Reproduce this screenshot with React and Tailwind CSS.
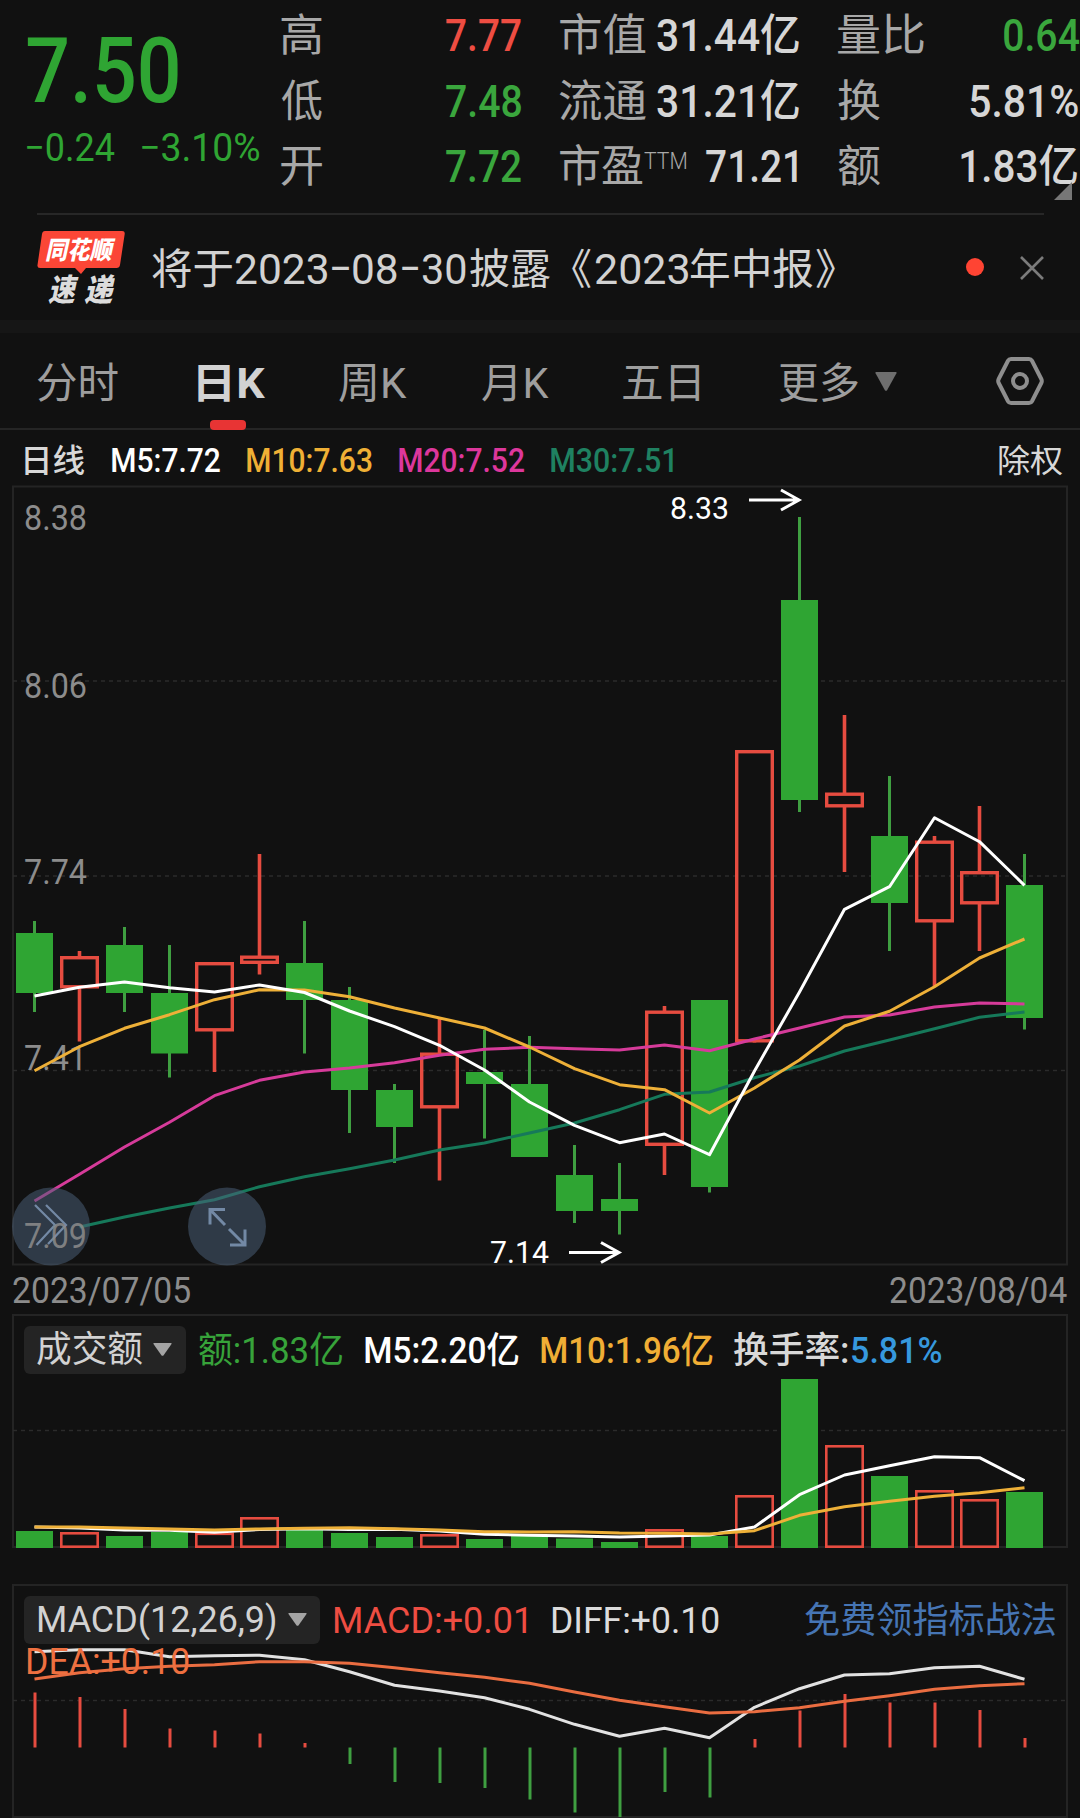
import { useLayoutEffect, useRef, useState } from 'react';
import clsx from 'clsx';

const GREEN = '#2fa533';
const RED = '#e64c40';
const STEP = 45;
const FIRST_X = 34.5;

const cx = (i) => FIRST_X + i * STEP;

// [up, high, bodyTop, bodyBottom, low]
const candles = [
  [0, 921, 933, 993, 1012],
  [1, 951, 956, 988.5, 1041.5],
  [0, 927, 945, 993, 1012],
  [0, 945, 993, 1053.5, 1077.5],
  [1, 962, 962, 1031.5, 1072],
  [1, 854, 955.5, 964, 974.5],
  [0, 921, 963, 1000, 1053.5],
  [0, 987, 1000, 1090, 1133],
  [0, 1084, 1090, 1127, 1163],
  [1, 1018, 1052.5, 1108.5, 1180.5],
  [0, 1030, 1072, 1084, 1138.5],
  [0, 1036, 1084, 1157, 1157],
  [0, 1145, 1175, 1211, 1223],
  [0, 1163, 1199, 1211, 1234.5],
  [1, 1006, 1010.5, 1146, 1175],
  [0, 1000, 1000, 1187, 1192.5],
  [1, 750, 750, 1042.5, 1042.5],
  [0, 517, 600, 800, 812],
  [1, 715, 792.5, 807.5, 872],
  [0, 776, 836, 903, 951],
  [1, 836, 840.5, 922.5, 986.5],
  [1, 806, 871, 904.5, 951],
  [0, 854, 885, 1018, 1029.5],
];

const ma5 = [996, 987.3, 982, 987.7, 992, 985, 992.5, 1011, 1026.7, 1045.3, 1070, 1102, 1125.3, 1142.7, 1134, 1154.7, 1071, 992, 909.3, 886.7, 817.7, 841.7, 885.3];
const ma10 = [1070.7, 1046.7, 1028.3, 1014.7, 999.7, 989.7, 990, 996.7, 1008, 1018, 1028, 1047, 1068.7, 1084.7, 1089.7, 1113, 1088, 1060, 1026, 1011.3, 986.7, 958, 939];
const ma20 = [1201, 1174.3, 1147, 1122.3, 1095.7, 1080.3, 1072, 1068, 1062.7, 1055.3, 1049.3, 1047.3, 1048.7, 1050, 1045, 1050.7, 1039, 1028, 1017, 1015, 1007, 1003, 1004];
const ma30 = [1227, 1217, 1208, 1199.7, 1186.7, 1176.7, 1168.7, 1160, 1150, 1143, 1133, 1123, 1109.7, 1094.3, 1092, 1077.7, 1066, 1051, 1040, 1028.7, 1017.3, 1012];

const volumeTops = [1531, 1532, 1536, 1532, 1532.5, 1517, 1530, 1533, 1537, 1534, 1539, 1536, 1538.5, 1542, 1529, 1536, 1495, 1379, 1445, 1476, 1490, 1499, 1492];
const vol5 = [1527, 1528, 1530, 1530.3, 1532.3, 1529.5, 1528.7, 1529.5, 1529.3, 1531, 1534.3, 1535.3, 1536, 1537, 1536, 1535, 1527, 1494.7, 1475, 1465.7, 1456.7, 1457.7, 1480.7];
const vol10 = [1527, 1527, 1528, 1529, 1530, 1529, 1528.3, 1527.7, 1528.7, 1530, 1531.7, 1532, 1531.7, 1533, 1533.3, 1534, 1530.7, 1515.3, 1506.7, 1501.3, 1496.3, 1492.7, 1487.7];

const MACD_ZERO = 1747.5;
const macdEnds = [1692.5, 1697, 1709, 1728.5, 1730.5, 1733.5, 1743, 1764, 1782, 1783, 1788, 1799.5, 1812.5, 1817, 1792, 1797.5, 1739, 1710.5, 1694, 1702.5, 1702.5, 1710, 1738];
const diff = [1651.7, 1649.7, 1649.7, 1656.7, 1655.7, 1655.3, 1659.7, 1671.7, 1685.3, 1691, 1697.7, 1709.3, 1724.3, 1736.3, 1728.3, 1737.7, 1707.3, 1688.7, 1675, 1673.7, 1667.7, 1666.3, 1679.3];
const dea = [1679, 1672.7, 1668.7, 1666.3, 1664.7, 1661.7, 1661.7, 1663.3, 1667.7, 1672.7, 1677.3, 1683.3, 1692, 1700.3, 1706.7, 1713, 1711.7, 1707.7, 1701.3, 1695.7, 1689.3, 1685.7, 1683.7];

// Condenses or stretches a label so that its ink is exactly w wide
const Fit = ({ w, className, children }) => {
  const ref = useRef(null);
  const [transform, setTransform] = useState('none');

  useLayoutEffect(() => {
    const css = getComputedStyle(ref.current);
    const ctx = document.createElement('canvas').getContext('2d');
    ctx.font = `${css.fontStyle} ${css.fontWeight} ${css.fontSize} ${css.fontFamily}`;
    const m = ctx.measureText(children);
    const scale = w / (m.actualBoundingBoxLeft + m.actualBoundingBoxRight);
    setTransform(`translateX(${m.actualBoundingBoxLeft * scale}px) scaleX(${scale})`);
  }, [w, children]);

  return (
    <span className={clsx('block shrink-0 whitespace-nowrap', className)} style={{ width: w }}>
      <span ref={ref} className="inline-block origin-left" style={{ transform }}>{children}</span>
    </span>
  );
};

const Line = ({ data, color, start = 0, width = 3 }) => (
  <polyline
    points={data.map((y, i) => `${cx(i + start)},${y}`).join(' ')}
    fill="none"
    stroke={color}
    strokeWidth={width}
    strokeLinejoin="round"
  />
);

const Grid = ({ y }) => (
  <line x1="13" x2="1066" y1={y} y2={y} stroke="#2b2b2b" strokeWidth="1.6" strokeDasharray="4 4" />
);

const Frame = ({ y, h }) => (
  <rect x="13" y={y} width="1054" height={h} fill="none" stroke="#242424" strokeWidth="2" />
);

const Bar = ({ i, top, bottom, up, stroke = 3.4 }) =>
  up ? (
    <rect
      x={cx(i) - 19.5 + stroke / 2}
      y={top + stroke / 2}
      width={39 - stroke}
      height={bottom - top - stroke}
      fill="none"
      stroke={RED}
      strokeWidth={stroke}
    />
  ) : (
    <rect x={cx(i) - 18.5} y={top} width="37" height={bottom - top} fill={GREEN} />
  );

const Caret = ({ className }) => (
  <svg viewBox="0 0 20 14" preserveAspectRatio="none" className={className}>
    <path d="M1 0h18q1 0 .5 1l-8.5 12.4q-1 .9-2 0L.5 1Q0 0 1 0z" fill="currentColor" />
  </svg>
);

const Arrow = ({ x, y }) => (
  <path d={`M${x} ${y}h49M${x + 32} ${y - 10}L${x + 50} ${y}l-18 10`} fill="none" stroke="#fff" strokeWidth="3" />
);

const Quote = () => (
  <header className="flex h-[213px] pl-[27px]">
    <div className="w-[254px] pt-[22px] text-[#2fa533]">
      <Fit w={151} className="text-[90px] leading-[99px] font-medium">7.50</Fit>
      <div className="flex gap-[27px] text-[39px] leading-[55px]">
        <Fit w={88}>−0.24</Fit>
        <Fit w={117}>−3.10%</Fit>
      </div>
    </div>

    <div className="flex w-[279px] flex-col pt-[4px] text-[44px] leading-[65.5px]">
      <div className="flex">
        <Fit w={41} className="text-[#a8a8a8]">高</Fit>
        <Fit w={75} className="ml-[124px] font-medium text-[#ee4d42]">7.77</Fit>
      </div>
      <div className="flex">
        <Fit w={41} className="text-[#a8a8a8]">低</Fit>
        <Fit w={75} className="ml-[124px] font-medium text-[#3aa63d]">7.48</Fit>
      </div>
      <div className="flex">
        <Fit w={41} className="text-[#a8a8a8]">开</Fit>
        <Fit w={75} className="ml-[124px] font-medium text-[#3aa63d]">7.72</Fit>
      </div>
    </div>

    <div className="flex w-[278px] flex-col pt-[4px] text-[44px] leading-[65.5px] text-[#d6d6d6]">
      <div className="flex">
        <Fit w={86} className="text-[#a8a8a8]">市值</Fit>
        <Fit w={142} className="ml-[11px] font-medium">31.44亿</Fit>
      </div>
      <div className="flex">
        <Fit w={87} className="-ml-px text-[#a8a8a8]">流通</Fit>
        <Fit w={142} className="ml-[11px] font-medium">31.21亿</Fit>
      </div>
      <div className="flex">
        <Fit w={83} className="text-[#a8a8a8]">市盈</Fit>
        <Fit w={42} className="ml-[1px] text-[23px] leading-[53px] font-light text-[#a8a8a8]">TTM</Fit>
        <Fit w={91} className="ml-[20px] font-medium">71.21</Fit>
      </div>
    </div>

    <div className="relative flex w-[241px] flex-col pt-[4px] text-[44px] leading-[65.5px] text-[#d6d6d6]">
      <div className="flex justify-between">
        <Fit w={86} className="text-[#a8a8a8]">量比</Fit>
        <Fit w={75} className="font-medium text-[#3aa63d]">0.64</Fit>
      </div>
      <div className="flex justify-between pr-[1px]">
        <Fit w={42} className="text-[#a8a8a8]">换</Fit>
        <Fit w={108} className="font-medium">5.81%</Fit>
      </div>
      <div className="flex justify-between pr-[2px]">
        <Fit w={42} className="text-[#a8a8a8]">额</Fit>
        <Fit w={116} className="font-medium">1.83亿</Fit>
      </div>
      <svg viewBox="0 0 18 18" className="absolute top-[182px] right-[7px] w-[18px]">
        <path d="M18 0v18H0z" fill="#777" />
      </svg>
    </div>
  </header>
);

const Notice = () => (
  <section className="flex h-[105px] items-start pl-[37px]">
    <div className="relative mt-[16px] h-[74px] w-[88px]">
      <svg viewBox="0 0 88 44" className="absolute top-0 left-0 w-[88px]">
        <path d="M8 0h77q3 0 2.700 3L83 34q-.5 3-3.500 3H49l-5 6-6-6H3q-3 0-2.500-3L5 3q.5-3 3-3z" fill="#fb4636" />
      </svg>
      <div className="relative flex flex-col pt-[4px] font-black text-white italic">
        <Fit w={70} className="ml-[9px] text-[25px] leading-[32px]">同花顺</Fit>
        <div className="mt-[7px] ml-[11px] flex gap-[5px] text-[31px] leading-[34px] text-[#dcdcdc]">
          <Fit w={31}>速</Fit>
          <Fit w={31}>递</Fit>
        </div>
      </div>
    </div>
    <div className="mt-[27px] ml-[27px] flex text-[42px] leading-[56px] text-[#d2d2d2]">
      <Fit w={80}>将于</Fit>
      <Fit w={92} className="ml-[3px]">2023</Fit>
      <Fit w={17} className="ml-[5px]">–</Fit>
      <Fit w={44} className="ml-[4px]">08</Fit>
      <Fit w={16} className="ml-[5px]">–</Fit>
      <Fit w={44} className="ml-[4px]">30</Fit>
      <Fit w={80} className="ml-[4px]">披露</Fit>
      <Fit w={19} className="ml-[22px]">《</Fit>
      <Fit w={93} className="ml-[4px]">2023</Fit>
      <Fit w={122} className="ml-[3px]">年中报</Fit>
      <Fit w={19} className="ml-[3px]">》</Fit>
    </div>
    <span className="mt-[43px] ml-auto size-[18px] rounded-full bg-[#ff4433]" />
    <svg viewBox="0 0 24 24" className="mt-[41px] mr-[36px] ml-[36px] w-[24px]">
      <path d="M1 1l22 22M23 1L1 23" stroke="#7b7b7b" strokeWidth="2.600" />
    </svg>
  </section>
);

const Tabs = () => (
  <nav className="flex h-[97px] border-b-2 border-[#252525] pl-[37px] text-[42px] leading-[102px] text-[#9e9e9e]">
    <Fit w={81}>分时</Fit>
    <div className="relative ml-[80px]">
      <Fit w={67} className="font-bold text-[#d2d2d2]">日K</Fit>
      <span className="absolute top-[87px] left-[12px] h-[10px] w-[36px] rounded-[4px] bg-[#e83434]" />
    </div>
    <Fit w={68} className="ml-[74px]">周K</Fit>
    <Fit w={67} className="ml-[75px]">月K</Fit>
    <Fit w={76} className="ml-[74px]">五日</Fit>
    <Fit w={79} className="ml-[80px]">更多</Fit>
    <Caret className="mt-[39px] ml-[17px] h-[19px] w-[22px] text-[#6e6e6e]" />
    <svg viewBox="0 0 48 48" className="mt-[24px] mr-[36px] ml-auto size-[48px]" fill="none" stroke="#8e8e8e">
      <path d="M15 2h18q2 0 3 1.800L45.300 22q1 2 0 4L36 44.200q-1 1.800-3 1.800H15q-2 0-3-1.800L2.700 26q-1-2 0-4L12 3.800Q13 2 15 2z" strokeWidth="4" />
      <circle cx="24" cy="24" r="7" strokeWidth="4" />
    </svg>
  </nav>
);

const MaLegend = () => (
  <div className="flex h-[55px] pr-[18px] pl-[25px] text-[33.5px] leading-[62px] font-medium">
    <Fit w={59} className="text-[32px] text-[#d8d8d8]">日线</Fit>
    <Fit w={108} className="ml-[28px] text-white">M5:7.72</Fit>
    <Fit w={125} className="ml-[27px] text-[#efb035]">M10:7.63</Fit>
    <Fit w={125} className="ml-[27px] text-[#dd379c]">M20:7.52</Fit>
    <Fit w={122} className="ml-[27px] text-[#1f8161]">M30:7.51</Fit>
    <Fit w={63} className="ml-auto text-[32px] font-normal text-[#d8d8d8]">除权</Fit>
  </div>
);

const axisLabels = [
  ['8.38', 529.5],
  ['8.06', 698],
  ['7.74', 884],
  ['7.41', 1070],
];

const AxisLabel = ({ y, children }) => (
  <text x="24" y={y} fontSize="35.500" fill="#8c8c8c" textLength="63" lengthAdjust="spacingAndGlyphs">
    {children}
  </text>
);

const PriceChart = () => (
  <svg viewBox="12 485 1056 781" className="mx-[12px] block h-[781px] w-[1056px] shrink-0 overflow-visible">
    <Frame y={486.5} h={778} />
    <Grid y={681} />
    <Grid y={876} />
    <Grid y={1070.5} />
    {axisLabels.map(([label, y]) => (
      <AxisLabel key={label} y={y}>{label}</AxisLabel>
    ))}
    {candles.map(([up, high, top, bottom, low], i) => (
      <g key={i}>
        <path
          d={`M${cx(i)} ${high}V${top + 1}M${cx(i)} ${bottom - 1}V${low}`}
          stroke={up ? RED : '#3f9f41'}
          strokeWidth={up ? 3.6 : 3}
        />
        <Bar i={i} top={top} bottom={bottom} up={up} />
      </g>
    ))}
    <Line data={ma30} color="#16795a" start={1} />
    <Line data={ma20} color="#d63b9a" />
    <Line data={ma10} color="#eeb038" />
    <Line data={ma5} color="#fff" />

    <text x="670" y="519" fontSize="32" fill="#fff" textLength="59" lengthAdjust="spacingAndGlyphs">8.33</text>
    <Arrow x={749} y={500} />
    <text x="490" y="1263" fontSize="32" fill="#fff" textLength="59" lengthAdjust="spacingAndGlyphs">7.14</text>
    <Arrow x={569} y={1252.5} />

    <g fill="#4a5f78" fillOpacity=".52">
      <circle cx="51" cy="1226.500" r="39" />
      <circle cx="227" cy="1226.500" r="39" />
    </g>
    <g fill="none" stroke="#7389a5" strokeWidth="2.600">
      <path d="M35 1205l20 20-18.500 20M46 1205l20 20-18 19" strokeWidth="2.200" />
      <path d="M225 1209.500h-15v15M210 1209.500l15 15.500M230 1245h15v-15.500M245 1245l-16-16" strokeWidth="3" />
    </g>
    <g opacity=".85">
      <AxisLabel y={1247.5}>7.09</AxisLabel>
    </g>
  </svg>
);

const VolumePanel = () => (
  <section className="relative mx-[12px] h-[235px] shrink-0">
    <svg viewBox="12 1314 1056 235" className="block h-[235px] w-[1056px]">
      <Frame y={1315} h={232} />
      <Grid y={1430.5} />
      {volumeTops.map((top, i) => (
        <Bar key={i} i={i} top={top} bottom={1548} up={candles[i][0]} stroke={2.6} />
      ))}
      <Line data={vol5} color="#fff" />
      <Line data={vol10} color="#eeb038" />
    </svg>
    <div className="absolute inset-x-0 top-[12px] flex pl-[12px] text-[36px] leading-[51px]">
      <button className="flex h-[48px] w-[162px] items-center gap-[11px] rounded-[6px] bg-[#242424] pl-[13px] text-[#d2d2d2]">
        <Fit w={105}>成交额</Fit>
        <Caret className="mb-[1px] h-[13px] w-[19px] text-[#a4a4a4]" />
      </button>
      <Fit w={143} className="ml-[13px] text-[#37a33a]">额:1.83亿</Fit>
      <Fit w={154} className="ml-[23px] font-medium text-white">M5:2.20亿</Fit>
      <Fit w={172} className="ml-[22px] font-medium text-[#f0ae35]">M10:1.96亿</Fit>
      <Fit w={114} className="ml-[21px] font-medium text-[#d8d8d8]">换手率:</Fit>
      <Fit w={89} className="ml-[4px] font-medium text-[#3698de]">5.81%</Fit>
    </div>
  </section>
);

const MacdPanel = () => (
  <section className="relative mx-[12px] mt-[35px] h-[234px] shrink-0">
    <svg viewBox="12 1584 1056 234" className="block h-[234px] w-[1056px]">
      <Frame y={1585} h={232} />
      <Grid y={1700.5} />
      {macdEnds.map((y, i) => (
        <line
          key={i}
          x1={cx(i) + 0.5}
          x2={cx(i) + 0.5}
          y1={MACD_ZERO}
          y2={y}
          stroke={y < MACD_ZERO ? RED : '#3f9f41'}
          strokeWidth="3"
        />
      ))}
      <Line data={diff} color="#e2e2e2" />
      <Line data={dea} color="#ea6d41" />
    </svg>
    <div className="absolute inset-x-0 top-[12px] flex pr-[13px] pl-[12px] text-[36px] leading-[51px]">
      <button className="flex h-[48px] w-[296px] items-center gap-[13px] rounded-[6px] bg-[#242424] pl-[14px] text-[#d2d2d2]">
        <Fit w={237}>MACD(12,26,9)</Fit>
        <Caret className="mb-[1px] h-[13px] w-[19px] text-[#a4a4a4]" />
      </button>
      <Fit w={192} className="ml-[14px] text-[#ee4d42]">MACD:+0.01</Fit>
      <Fit w={167} className="ml-[26px] text-[#dcdcdc]">DIFF:+0.10</Fit>
      <Fit w={250} className="ml-auto text-[#4675b4]">免费领指标战法</Fit>
    </div>
    <div className="absolute top-[54px] left-[15px] text-[36px] leading-[48px] text-[#ee7040]">
      <Fit w={162}>DEA:+0.10</Fit>
    </div>
  </section>
);

export default function App() {
  return (
    <main className="flex h-[1818px] w-[1080px] flex-col overflow-hidden bg-[#111] font-['Roboto','Noto_Sans_CJK_SC',sans-serif]">
      <Quote />
      <hr className="mr-[36px] ml-[37px] border-t-2 border-[#272727]" />
      <Notice />
      <div className="h-[13px] shrink-0 bg-[#161616]" />
      <Tabs />
      <MaLegend />
      <PriceChart />
      <div className="flex h-[48px] shrink-0 justify-between px-[13px] text-[36px] leading-[50px] text-[#8c8c8c]">
        <Fit w={177}>2023/07/05</Fit>
        <Fit w={177}>2023/08/04</Fit>
      </div>
      <VolumePanel />
      <MacdPanel />
    </main>
  );
}
